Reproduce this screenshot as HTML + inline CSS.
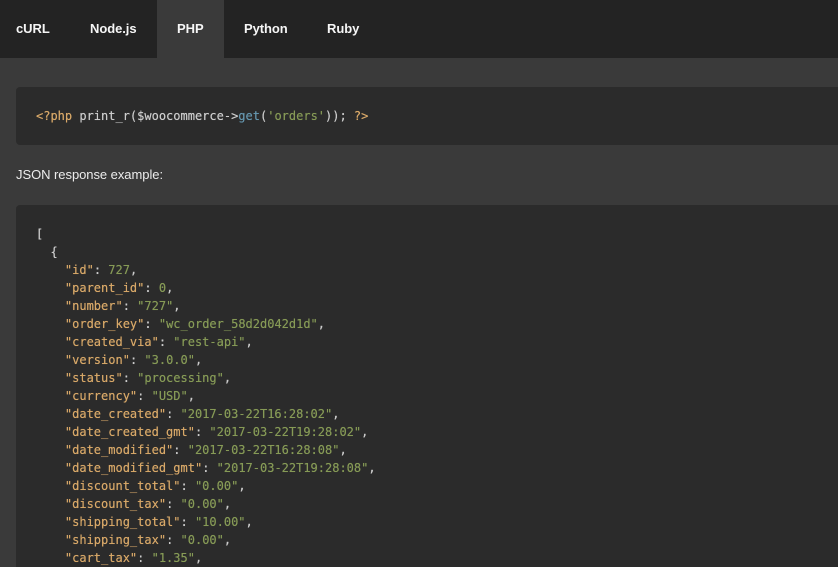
<!DOCTYPE html>
<html>
<head>
<meta charset="utf-8">
<style>
html,body{margin:0;padding:0;width:838px;height:567px;overflow:hidden;background:#3a3a3a;}
body{position:relative;font-family:"Liberation Sans",Arial,sans-serif;}
.bar{position:absolute;left:0;top:0;width:838px;height:58px;background:#232323;}
.tab{position:absolute;top:0;height:58px;line-height:57px;font-size:13px;font-weight:bold;color:#f6f6f6;white-space:nowrap;letter-spacing:-.06px;}
.active{position:absolute;left:157px;top:0;width:67px;height:58px;background:#3a3a3a;}
.block{position:absolute;left:16px;width:840px;background:#2b2b2b;border-radius:4px;}
pre{position:absolute;left:36px;margin:0;font-family:"DejaVu Sans Mono",monospace;font-size:12px;line-height:18px;color:#cccccc;white-space:pre;text-shadow:0 0 .4px currentColor;}
.k{color:#d8a868;}
.s{color:#869a56;}
.f{color:#6596ae;}
.p{position:absolute;left:16px;top:166px;font-size:13px;line-height:18px;color:#ececec;white-space:nowrap;letter-spacing:-.05px;}
</style>
</head>
<body>
<div class="bar"></div>
<div class="active"></div>
<div class="tab" style="left:16px">cURL</div>
<div class="tab" style="left:90px">Node.js</div>
<div class="tab" style="left:177px">PHP</div>
<div class="tab" style="left:244px">Python</div>
<div class="tab" style="left:327px">Ruby</div>
<div class="block" style="top:87px;height:58px"></div>
<pre style="top:107px"><span class="k">&lt;?php</span> print_r($woocommerce-&gt;<span class="f">get</span>(<span class="s">'orders'</span>)); <span class="k">?&gt;</span></pre>
<div class="p">JSON response example:</div>
<div class="block" style="top:205px;height:380px"></div>
<pre style="top:225px">[
  {
    <span class="k">"id"</span>: <span class="s">727</span>,
    <span class="k">"parent_id"</span>: <span class="s">0</span>,
    <span class="k">"number"</span>: <span class="s">"727"</span>,
    <span class="k">"order_key"</span>: <span class="s">"wc_order_58d2d042d1d"</span>,
    <span class="k">"created_via"</span>: <span class="s">"rest-api"</span>,
    <span class="k">"version"</span>: <span class="s">"3.0.0"</span>,
    <span class="k">"status"</span>: <span class="s">"processing"</span>,
    <span class="k">"currency"</span>: <span class="s">"USD"</span>,
    <span class="k">"date_created"</span>: <span class="s">"2017-03-22T16:28:02"</span>,
    <span class="k">"date_created_gmt"</span>: <span class="s">"2017-03-22T19:28:02"</span>,
    <span class="k">"date_modified"</span>: <span class="s">"2017-03-22T16:28:08"</span>,
    <span class="k">"date_modified_gmt"</span>: <span class="s">"2017-03-22T19:28:08"</span>,
    <span class="k">"discount_total"</span>: <span class="s">"0.00"</span>,
    <span class="k">"discount_tax"</span>: <span class="s">"0.00"</span>,
    <span class="k">"shipping_total"</span>: <span class="s">"10.00"</span>,
    <span class="k">"shipping_tax"</span>: <span class="s">"0.00"</span>,
    <span class="k">"cart_tax"</span>: <span class="s">"1.35"</span>,
</pre>
</body>
</html>
